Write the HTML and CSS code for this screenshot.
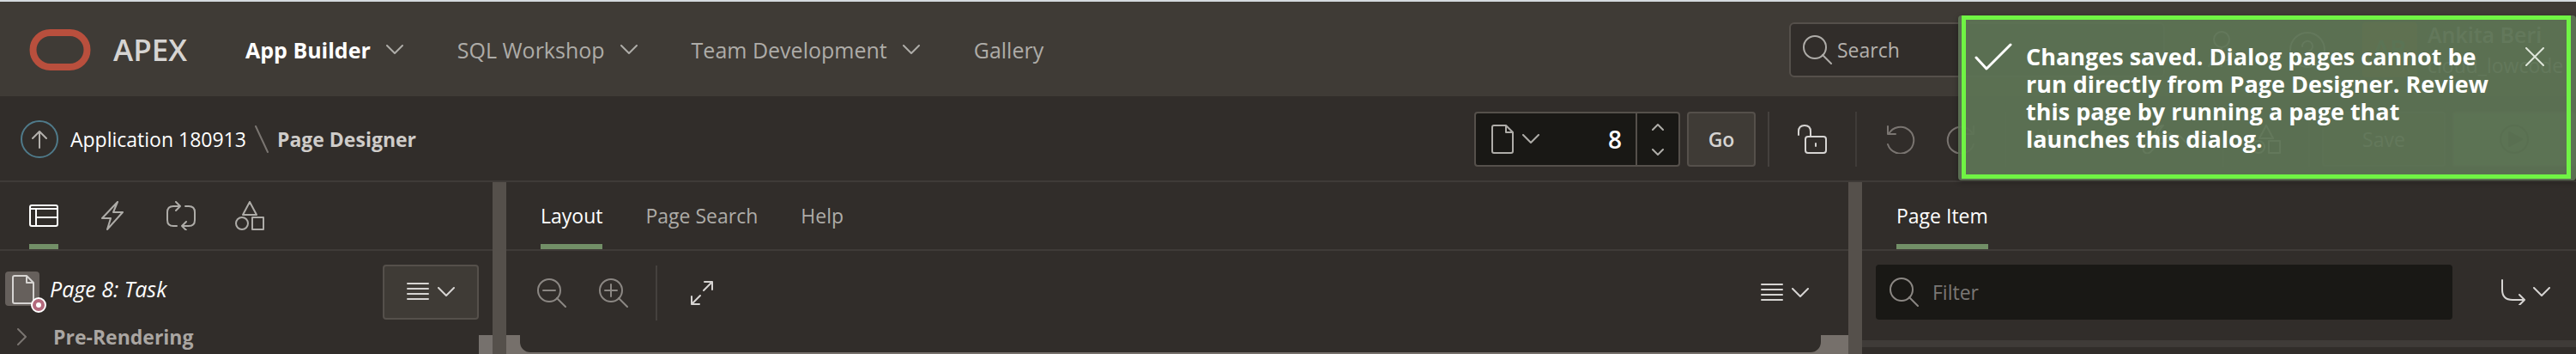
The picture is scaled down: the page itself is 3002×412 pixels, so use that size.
FILE: index.html
```
<!DOCTYPE html>
<html lang="en">
<head>
<meta charset="utf-8">
<title>Page Designer</title>
<link rel="stylesheet" href="styles.css">
</head>
<body>
<svg class="defs" aria-hidden="true">
  <symbol id="chev" viewBox="0 0 20 12"><path d="M1 1l9 9 9-9"/></symbol>
  <symbol id="lens" viewBox="0 0 34 34"><circle cx="14" cy="14" r="13"/><path d="M23 23l10 10"/></symbol>
  <symbol id="doc" viewBox="0 0 26 34"><path d="M3 1h14l8 8v22q0 2-2 2H3q-2 0-2-2V3q0-2 2-2zM17 1v8h8"/></symbol>
  <symbol id="shapes" viewBox="0 0 34 34"><path d="M17 1l8 15H9zM20 19h13v14H20z"/><circle cx="8" cy="26" r="7"/></symbol>
  <symbol id="lines" viewBox="0 0 26 24"><path d="M1 2h24M1 8h24M1 14h24M1 20h24"/></symbol>
  <symbol id="undo" viewBox="0 0 34 34"><path d="M2 2v9h9M3 11A15.500 15.500 0 1 1 2 23"/></symbol>
</svg>

<header class="topbar">
  <a class="brand" href="#">
    <svg width="72" height="48" viewBox="0 0 72 48"><rect x="4.500" y="4" width="63" height="40" rx="20" stroke-width="8"/></svg>
    <span>APEX</span>
  </a>
  <nav class="menu">
    <a class="current" href="#">App Builder <svg class="chev"><use href="#chev"/></svg></a>
    <a href="#">SQL Workshop <svg class="chev"><use href="#chev"/></svg></a>
    <a href="#">Team Development <svg class="chev"><use href="#chev"/></svg></a>
    <a href="#">Gallery</a>
  </nav>
  <label class="search"><svg class="lens"><use href="#lens"/></svg><input type="text" placeholder="Search" aria-label="Search"></label>
  <button class="top-btn" aria-label="Administration"><svg width="34" height="44" viewBox="0 0 34 44"><circle cx="17" cy="10" r="9"/><path d="M17 19v22M17 34h9M2 41l8-14M24 20l8 10"/></svg></button>
  <button class="top-btn" aria-label="Help"><svg width="42" height="42" viewBox="0 0 42 42"><circle cx="21" cy="21" r="20"/><path d="M15 17a6 6 0 1 1 9 5q-3 2-3 6M21 31v2"/></svg></button>
  <div class="account">
    <span class="avatar">AB</span>
    <span class="who"><b>Ankita Beri</b><span>cloud_lowcode</span></span>
  </div>
</header>

<div class="toolbar">
  <nav class="crumbs">
    <a class="up" href="#" aria-label="Up"><svg width="44" height="44" viewBox="0 0 44 44"><circle class="ring" cx="22" cy="22" r="21"/><path d="M22 32V13M14 21l8-8 8 8"/></svg></a>
    <a href="#">Application 180913</a>
    <svg class="slash" width="16" height="32" viewBox="0 0 16 32"><path d="M1 1l14 30"/></svg>
    <b>Page Designer</b>
  </nav>
  <div class="tools">
    <div class="page-pick">
      <button class="pick" aria-label="Pick page"><svg width="26" height="34"><use href="#doc"/></svg><svg class="chev"><use href="#chev"/></svg></button>
      <input type="text" value="8" aria-label="Page number">
      <div class="steps">
        <button aria-label="Next page"><svg width="14" height="9" viewBox="0 0 14 9"><path d="M1 8l6-6 6 6"/></svg></button>
        <button aria-label="Previous page"><svg width="14" height="9" viewBox="0 0 14 9"><path d="M1 1l6 6 6-6"/></svg></button>
      </div>
    </div>
    <button class="btn go">Go</button>
    <button class="tool lock" aria-label="Unlocked"><svg width="34" height="34" viewBox="0 0 34 34"><rect x="9" y="14" width="24" height="19" rx="3"/><path d="M1 12V8q0-7 7-7t7 7v6M21 22v3"/></svg></button>
    <div class="history">
      <button class="tool" aria-label="Undo"><svg width="34" height="34"><use href="#undo"/></svg></button>
      <button class="tool" aria-label="Redo"><svg class="flip" width="34" height="34"><use href="#undo"/></svg></button>
    </div>
    <div class="create">
      <button class="tool" aria-label="Create"><svg width="34" height="34" viewBox="0 0 34 34"><path d="M17 7v20M7 17h20"/></svg><svg class="chev"><use href="#chev"/></svg></button>
      <button class="tool" aria-label="Utilities"><svg width="34" height="34" viewBox="0 0 34 34"><path d="M25 1l-6 7 2 7 7 1 5-6q2 10-8 12h-6l-9 10q-4 3-7 0t0-7l12-10q-1-13 10-14z"/></svg><svg class="chev"><use href="#chev"/></svg></button>
    </div>
    <button class="tool shared" aria-label="Shared components"><svg width="34" height="34"><use href="#shapes"/></svg></button>
    <button class="btn save">Save</button>
    <button class="btn run" aria-label="Save and run page"><svg width="34" height="34" viewBox="0 0 34 34"><circle cx="17" cy="17" r="16"/><path class="solid" d="M11 9l15 8-15 8z"/></svg></button>
  </div>
</div>

<main class="panes">
  <section class="pane">
    <div class="tabs icon-tabs">
      <button class="on" aria-label="Rendering"><svg width="34" height="34" viewBox="0 0 34 34"><rect x="1" y="5" width="32" height="24" rx="2"/><path d="M1 9h32M8 9v20M8 19h25"/></svg></button>
      <button aria-label="Dynamic actions"><svg width="34" height="34" viewBox="0 0 34 34"><path d="M23 1L5 20h10l-4 13 18-20H18z"/></svg></button>
      <button aria-label="Processing"><svg width="34" height="34" viewBox="0 0 34 34"><path d="M12 29H8q-7 0-7-7V13Q1 6 8 6h8M11 1l5 5-5 5M22 6h4q7 0 7 7v9q0 7-7 7h-8M23 24l-5 5 5 5"/></svg></button>
      <button aria-label="Page shared components"><svg width="34" height="34"><use href="#shapes"/></svg></button>
    </div>
    <div class="tree">
      <div class="tree-root">
        <span class="doc-tile"><svg width="26" height="34"><use href="#doc"/></svg><svg class="badge" width="18" height="18" viewBox="0 0 18 18"><circle class="badge-bg" cx="9" cy="9" r="8"/><circle class="badge-dot" cx="9" cy="9" r="3"/></svg></span>
        <i>Page 8: Task</i>
        <button class="btn tree-menu" aria-label="Tree menu"><svg width="26" height="24"><use href="#lines"/></svg><svg class="chev"><use href="#chev"/></svg></button>
      </div>
      <div class="tree-node"><svg width="12" height="20" viewBox="0 0 12 20"><path d="M1 1l9 9-9 9"/></svg><b>Pre-Rendering</b><span class="scroll"></span></div>
    </div>
  </section>
  <div class="splitter"></div>
  <section class="pane center">
    <div class="tabs">
      <button class="on">Layout</button>
      <button>Page Search</button>
      <button>Help</button>
    </div>
    <div class="layout-bar">
      <button class="plain" aria-label="Zoom out"><svg class="dim" width="34" height="34" viewBox="0 0 34 34"><circle cx="14" cy="14" r="13"/><path d="M23 23l10 10M7 14h14"/></svg></button>
      <button class="plain" aria-label="Zoom in"><svg class="dim" width="34" height="34" viewBox="0 0 34 34"><circle cx="14" cy="14" r="13"/><path d="M23 23l10 10M7 14h14M14 7v14"/></svg></button>
      <span class="rule"></span>
      <button class="plain" aria-label="Expand"><svg width="28" height="30" viewBox="0 0 28 30"><path d="M16 12L26 2M17 2h9v9M12 18L2 28M2 19v9h9"/></svg></button>
      <button class="plain push" aria-label="Layout menu"><svg width="26" height="24"><use href="#lines"/></svg><svg class="chev"><use href="#chev"/></svg></button>
    </div>
    <div class="canvas"><div class="canvas-top"></div></div>
  </section>
  <div class="splitter"></div>
  <section class="pane">
    <div class="tabs"><button class="on">Page Item</button></div>
    <div class="filter-bar">
      <label class="filter"><svg class="lens"><use href="#lens"/></svg><input type="text" placeholder="Filter" aria-label="Filter"></label>
      <button class="plain" aria-label="Go to group"><svg width="30" height="30" viewBox="0 0 30 30"><path d="M2 1v11q0 12 12 12h14M22 18l6 6-6 6"/></svg><svg class="chev"><use href="#chev"/></svg></button>
    </div>
    <div class="group-bar"></div>
  </section>
</main>

<div class="notice" role="alert">
  <div class="notice-box">
    <svg class="check" width="44" height="32" viewBox="0 0 44 32"><path d="M2 17l12 13L42 2"/></svg>
    <p>Changes saved. Dialog pages cannot be run directly from Page Designer. Review this page by running a page that launches this dialog.</p>
    <button class="close" aria-label="Close"><svg width="22" height="22" viewBox="0 0 22 22"><path d="M1 1l20 20M21 1L1 21"/></svg></button>
  </div>
</div>
</body>
</html>
```
FILE: styles.css
```
* { box-sizing: border-box; }
body {
  margin: 0;
  min-height: 100vh;
  display: flex;
  flex-direction: column;
  position: relative;
  overflow: hidden;
  background: #312d2a;
  color: #aeaca8;
  font: 23px/32px "Open Sans", "Noto Sans", sans-serif;
}
.defs { display: none; }
svg { fill: none; stroke: currentColor; stroke-width: 2; stroke-linecap: round; stroke-linejoin: round; flex: none; display: block; }
a { color: inherit; text-decoration: none; }
button { font: inherit; color: inherit; background: none; border: 0; padding: 0; display: flex; align-items: center; justify-content: center; }
input { font: inherit; color: #fff; background: none; border: 0; padding: 0; outline: 0; min-width: 0; width: 100%; }
.chev { width: 20px; height: 12px; }
.lens { width: 34px; height: 34px; }

.topbar { display: flex; align-items: center; height: 112px; border-top: 2px solid #d5dadf; padding: 2px 0 0 34px; background: #3f3b36; }
.brand { display: flex; align-items: center; gap: 26px; color: #d6d4d2; font-size: 35px; font-weight: 600; width: 252px; }
.brand svg { stroke: #b94f3d; }
.menu { display: flex; gap: 63px; font-size: 25px; flex: 1; }
.menu a { display: flex; align-items: center; gap: 18px; }
.menu .current { color: #fff; font-weight: 700; }
.menu .chev { color: #aeaca8; }
.search { display: flex; align-items: center; gap: 6px; width: 438px; height: 64px; padding: 0 14px; border: 2px solid #55504b; border-radius: 6px; background: #312d2a; margin-right: 16px; }
.search input::placeholder { color: #b4b1ad; opacity: 1; }
.top-btn { width: 100px; height: 64px; color: #d6d4d2; }
.account { display: flex; align-items: center; gap: 12px; width: 249px; margin-left: 14px; color: #fff; flex: none; line-height: 36px; }
.avatar { width: 64px; height: 64px; line-height: 64px; border-radius: 4px; text-align: center; background: #8a5a20; color: #40806a; font-size: 30px; font-weight: 600; }
.who { display: flex; flex-direction: column; color: #d6d4d2; }
.who b { font-size: 25px; font-weight: 600; }

.toolbar { display: flex; align-items: center; justify-content: space-between; padding: 18px 0 16px 24px; border-bottom: 2px solid #3f3b38; }
.crumbs { display: flex; align-items: center; color: #fff; }
.crumbs b { color: #cfccc9; }
.up { margin-right: 14px; color: #b4b1ad; }
.ring { stroke: #4f7a8a; }
.slash { margin: 0 10px; color: #7a7571; }
.tools { display: flex; height: 64px; color: #d6d4d2; }
.page-pick { display: flex; width: 240px; border: 2px solid #55504b; border-radius: 4px; background: #191815; }
.pick { gap: 10px; padding: 0 18px; color: #aeaca8; }
.page-pick input { font-size: 28px; font-weight: 600; text-align: right; padding-right: 16px; flex: 1; }
.steps { display: flex; flex-direction: column; width: 50px; border-left: 2px solid #55504b; color: #aeaca8; }
.steps button { flex: 1; }
.btn { border: 2px solid #55504b; border-radius: 4px; background: #3f3b36; color: #d6d4d2; }
.go { width: 80px; margin: 0 14px 0 8px; font-weight: 600; }
.tool { gap: 8px; }
.lock { width: 102px; border-left: 2px solid #45413e; }
.history { display: flex; padding: 0 16px; border: solid #3f3b38; border-width: 0 2px; color: #7a7571; }
.history .tool { width: 70px; }
.flip { transform: scaleX(-1); }
.create { display: flex; }
.create .tool { width: 126px; }
.shared { width: 102px; border: solid #3f3b38; border-width: 0 2px; }
.save { width: 144px; margin: 0 8px 0 14px; }
.run { width: 144px; background: #4a7a4c; color: #1b2a1a; }
.solid { fill: currentColor; }

.panes { flex: 1; display: grid; grid-template-columns: 574px 16px minmax(0, 1fr) 16px 832px; }
.splitter { background: #55504b; }
.pane { display: flex; flex-direction: column; min-width: 0; }
.tabs { display: flex; gap: 50px; height: 80px; padding: 0 40px; border-bottom: 2px solid #3f3b38; }
.tabs button { border: solid transparent; border-width: 6px 0; }
.tabs .on { color: #fff; border-bottom-color: #728f67; }
.icon-tabs { gap: 46px; padding: 0 34px; }
.tree-root { display: flex; align-items: center; gap: 12px; padding: 16px 16px 0 6px; color: #fff; }
.doc-tile { position: relative; width: 40px; height: 40px; margin-bottom: 8px; padding: 4px 8px; border-radius: 4px; background: #66605c; color: #d6d4d2; }
.tree-root i { padding-bottom: 8px; font-size: 25px; }
.badge { position: absolute; right: -8px; bottom: -8px; }
.badge-bg { fill: #b3697c; stroke: #fff; }
.badge-dot { fill: #fff; stroke: none; }
.tree-menu { width: 112px; height: 64px; gap: 10px; margin-left: auto; }
.tree-node { display: flex; align-items: center; gap: 30px; height: 40px; padding-left: 20px; color: #7a7571; }
.tree-node b { color: #aaa6a2; }
.scroll { width: 16px; height: 22px; margin-left: auto; align-self: flex-end; background: #76716d; }
.layout-bar { display: flex; align-items: center; height: 98px; padding: 0 46px 0 36px; color: #d6d4d2; }
.layout-bar .plain { height: 64px; margin-right: 38px; }
.dim { color: #8b8783; }
.rule { width: 2px; height: 64px; margin: 0 38px 0 -6px; background: #45413e; }
.plain { gap: 8px; }
.layout-bar .push { gap: 10px; margin: 0 0 0 auto; }
.canvas { flex: 1; padding: 0 32px 2px 16px; background: #76706b; }
.canvas-top { height: 20px; border-radius: 0 0 12px 12px; background: #312d2a; }
.filter-bar { display: flex; align-items: center; gap: 56px; padding: 16px 30px 24px 16px; color: #d6d4d2; }
.filter { display: flex; align-items: center; gap: 16px; flex: 1; height: 64px; padding: 0 16px; border-radius: 4px; background: #191815; color: #8b8783; }
.filter input::placeholder { color: #7a7774; opacity: 1; }
.group-bar { height: 8px; background: #3f3b38; }

.notice { position: absolute; top: 18px; right: 0; width: 720px; height: 192px; padding: 0 6px 2px 4px; border-radius: 4px; background: rgba(93, 115, 84, 0.95); box-shadow: 0 2px 6px rgba(0, 0, 0, 0.3); color: #fff; }
.notice-box { display: flex; align-items: flex-start; height: 100%; padding: 27px 26px 0 10px; border: 5px solid #70f444; }
.notice p { flex: 1; margin: 0 24px 0 16px; font-size: 27px; font-weight: 700; }
.check { stroke-width: 3; }
.close { margin-top: 5px; color: #dfe6da; }
```
